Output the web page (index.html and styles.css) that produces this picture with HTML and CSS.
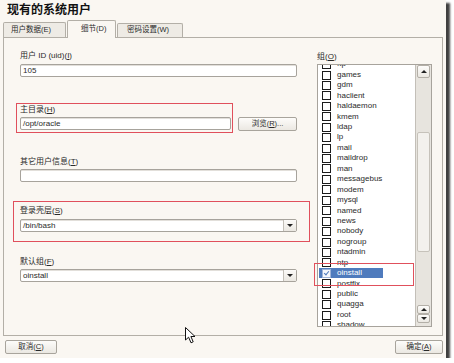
FILE: index.html
```html
<!DOCTYPE html>
<html lang="zh-CN">
<head>
    <meta charset="UTF-8">
    <title>现有的系统用户</title>
    <link rel="stylesheet" href="styles.css">
</head>
<body>
    <div class="window">
        <h1 class="title">现有的系统用户</h1>
        <div class="tabs">
            <div class="tab tab-data">用户数据(E)</div>
            <div class="tab tab-detail active">细节(D)</div>
            <div class="tab tab-password">密码设置(W)</div>
        </div>

        <div class="panel">
            <div class="col-left">
                <div class="field field-uid">
                    <label class="label">用户 ID (uid)(<u>I</u>)</label>
                    <div class="entry">105</div>
                </div>

                <div class="home-row">
                    <div class="mark mark-home">
                        <label class="label">主目录(<u>H</u>)</label>
                        <div class="entry entry-home">/opt/oracle</div>
                    </div>
                    <button class="btn btn-browse">浏览(<u>R</u>)...</button>
                </div>

                <div class="field field-info">
                    <label class="label">其它用户信息(<u>T</u>)</label>
                    <div class="entry"></div>
                </div>

                <div class="mark shell-box">
                    <label class="label">登录壳层(<u>S</u>)</label>
                    <div class="entry combo">
                        <span class="combo-text">/bin/bash</span>
                        <span class="combo-arrow"></span>
                    </div>
                </div>

                <div class="field field-group">
                    <label class="label">默认组(<u>F</u>)</label>
                    <div class="entry combo">
                        <span class="combo-text">oinstall</span>
                        <span class="combo-arrow"></span>
                    </div>
                </div>
            </div>

            <div class="col-right">
                <label class="label label-groups">组(<u>O</u>)</label>
                <div class="listbox">
                    <div class="list" id="group-list"></div>
                    <div class="scrollbar">
                        <div class="sb-btn sb-top"><span class="tri up"></span></div>
                        <div class="sb-thumb"></div>
                        <div class="sb-btn"><span class="tri up"></span></div>
                        <div class="sb-btn"><span class="tri down"></span></div>
                    </div>
                </div>
                <div class="mark mark-selected"></div>
            </div>
        </div>

        <div class="footer">
            <button class="btn btn-cancel">取消(<u>C</u>)</button>
            <button class="btn btn-ok">确定(<u>A</u>)</button>
        </div>

        <svg class="cursor" width="12" height="17" viewBox="0 0 12 17">
            <path d="M0.5 0.5 L0.5 13 L3.6 10.2 L6 15.8 L8.2 14.8 L5.9 9.5 L10 9.5 Z" fill="#fff" stroke="#111" stroke-width="1"/>
        </svg>
    </div>

    <script>
        const groups = ['ftp', 'games', 'gdm', 'haclient', 'haldaemon', 'kmem', 'ldap', 'lp', 'mail',
            'maildrop', 'man', 'messagebus', 'modem', 'mysql', 'named', 'news', 'nobody', 'nogroup',
            'ntadmin', 'ntp', 'oinstall', 'postfix', 'public', 'quagga', 'root', 'shadow'];
        const list = document.getElementById('group-list');

        groups.forEach(name => {
            const row = document.createElement('div');
            row.className = 'row';
            const item = document.createElement('span');
            item.className = name === 'oinstall' ? 'item selected' : 'item';
            item.innerHTML = '<span class="check"></span><span class="name"></span>';
            item.querySelector('.name').textContent = name;
            row.appendChild(item);
            list.appendChild(row);
        });
    </script>
</body>
</html>
```

FILE: styles.css
```css
:root {
    --bg-color: #faf7f2;
    --border-color: #b3afa7;
    --entry-border: #a7a39c;
    --text-color: #2a2a2a;
    --mark-color: #e0505c;
    --select-color: #4f7bbd;
}

body {
    margin: 0;
    background: #fff;
    font-family: 'Liberation Sans', 'Noto Sans CJK SC', sans-serif;
    font-size: 8px;
    color: var(--text-color);
}

.window {
    position: relative;
    width: 446px;
    height: 358px;
    background: var(--bg-color);
    box-shadow: 4px 3px 2px rgba(0, 0, 0, 0.75);
    display: flex;
    flex-direction: column;
}

.title {
    margin: 0;
    height: 20px;
    padding: 2px 0 0 7px;
    box-sizing: border-box;
    font-size: 12px;
    line-height: 16px;
    font-weight: bold;
    color: #111;
}

.tabs {
    display: flex;
    align-items: flex-end;
    gap: 1px;
    height: 17px;
    padding-left: 3px;
}

.tab {
    box-sizing: border-box;
    height: 15px;
    border: 1px solid var(--border-color);
    border-bottom: none;
    border-radius: 2px 2px 0 0;
    background: #eeebe5;
    padding-left: 7px;
    line-height: 13px;
    font-size: 7.5px;
}

.tab-data { width: 63px; }

.tab-detail {
    width: 49px;
    height: 18px;
    margin-bottom: -1px;
    background: var(--bg-color);
    position: relative;
    z-index: 1;
    padding-left: 13px;
    line-height: 15px;
}

.tab-password {
    width: 66px;
    height: 14px;
    padding-left: 9px;
    line-height: 12px;
}

.panel {
    box-sizing: border-box;
    height: 299px;
    margin: 0 3px;
    border: 1px solid var(--border-color);
    padding: 13px 10px 0 16px;
    display: flex;
    gap: 20px;
}

.col-left {
    width: 277px;
    flex-shrink: 0;
}

.col-right {
    width: 115px;
    position: relative;
}

.label {
    display: block;
    height: 10px;
    line-height: 10px;
    white-space: nowrap;
}

.entry {
    box-sizing: border-box;
    height: 13px;
    margin-top: 2px;
    border: 1px solid var(--entry-border);
    border-radius: 2px;
    background: #fff;
    box-shadow: inset 0 1px 0 #e2dfda;
    padding-left: 2px;
    line-height: 11px;
}

.field-uid .entry { margin-top: 3px; }

.home-row {
    display: flex;
    align-items: flex-end;
    margin-top: 26px;
    margin-left: -4px;
}

.mark {
    border: 1px solid var(--mark-color);
}

.mark-home {
    box-sizing: border-box;
    width: 217px;
    padding: 1px 1px 2px 3px;
}

.entry-home { width: 211px; }

.field-info { margin-top: 24px; }

.shell-box {
    box-sizing: border-box;
    width: 297px;
    height: 41px;
    margin: 19px 0 0 -7px;
    padding: 4px 0 0 6px;
}

.shell-box .entry {
    width: 277px;
    margin-top: 3px;
}

.field-group { margin-top: 15px; }

.combo {
    display: flex;
    padding-left: 0;
}

.combo-text {
    flex: 1;
    padding-left: 2px;
}

.combo-arrow {
    width: 12px;
    border-left: 1px solid #c3bfb8;
    background: linear-gradient(#fbfaf8, #ebe8e2);
    position: relative;
}

.combo-arrow::after {
    content: '';
    position: absolute;
    left: 3px;
    top: 4px;
    border: 3px solid transparent;
    border-top: 3px solid #222;
    border-bottom: none;
}

.btn {
    box-sizing: border-box;
    height: 14px;
    border: 1px solid #a8a49c;
    border-radius: 2px;
    background: linear-gradient(#fdfcfa, #ebe8e2);
    font-family: inherit;
    font-size: 7.5px;
    color: var(--text-color);
    padding: 0;
    line-height: 12px;
}

.btn-browse {
    width: 60px;
    margin: 0 0 2px 5px;
}

.label-groups { margin-top: 1px; }

.listbox {
    box-sizing: border-box;
    height: 263px;
    margin-top: 2px;
    border: 1px solid var(--entry-border);
    background: #fff;
    display: flex;
    overflow: hidden;
}

.list {
    flex: 1;
    margin-top: -5.6px;
}

.row {
    height: 10.44px;
    line-height: 10.44px;
    padding-left: 1px;
}

.item {
    display: inline-flex;
    align-items: center;
    height: 10px;
    width: 64px;
    padding-left: 3px;
    box-sizing: border-box;
    vertical-align: top;
    margin-top: 0.2px;
}

.check {
    box-sizing: border-box;
    width: 9px;
    height: 9px;
    border: 1.5px solid #1b1b1b;
    margin-right: 6px;
    flex-shrink: 0;
}

.item.selected {
    background: var(--select-color);
    color: #fff;
}

.item.selected .check {
    border: 1px solid #9fb4d8;
    background: #f4f7fc;
    position: relative;
}

.item.selected .check::after {
    content: '';
    position: absolute;
    left: 2px;
    top: 0;
    width: 2px;
    height: 4px;
    border: solid var(--select-color);
    border-width: 0 1.5px 1.5px 0;
    transform: rotate(40deg);
}

.scrollbar {
    width: 15px;
    border-left: 1px solid #c3bfb8;
    background: #e7e4de;
    display: flex;
    flex-direction: column;
    padding-bottom: 3px;
}

.sb-btn {
    box-sizing: border-box;
    height: 9px;
    margin: 0 1px;
    border: 1px solid var(--border-color);
    border-radius: 2px;
    background: linear-gradient(#fdfcfa, #ebe8e2);
    display: flex;
    align-items: center;
    justify-content: center;
}

.sb-top {
    height: 13px;
    margin-bottom: auto;
}

.sb-thumb {
    box-sizing: border-box;
    height: 120px;
    margin: 0 1px auto;
    border: 1px solid #c6c2ba;
    border-radius: 2px;
    background: #f3f1ed;
}

.tri {
    width: 0;
    height: 0;
    border-left: 3px solid transparent;
    border-right: 3px solid transparent;
}

.tri.up { border-bottom: 3px solid #222; }
.tri.down { border-top: 3px solid #222; }

.mark-selected {
    position: absolute;
    left: -3px;
    top: 212px;
    width: 100px;
    height: 23px;
    box-sizing: border-box;
}

.footer {
    display: flex;
    justify-content: space-between;
    padding: 4px 3px 0 5px;
}

.btn-cancel { width: 52px; }
.btn-ok { width: 48px; }

.cursor {
    position: absolute;
    left: 185px;
    top: 327px;
}
```
